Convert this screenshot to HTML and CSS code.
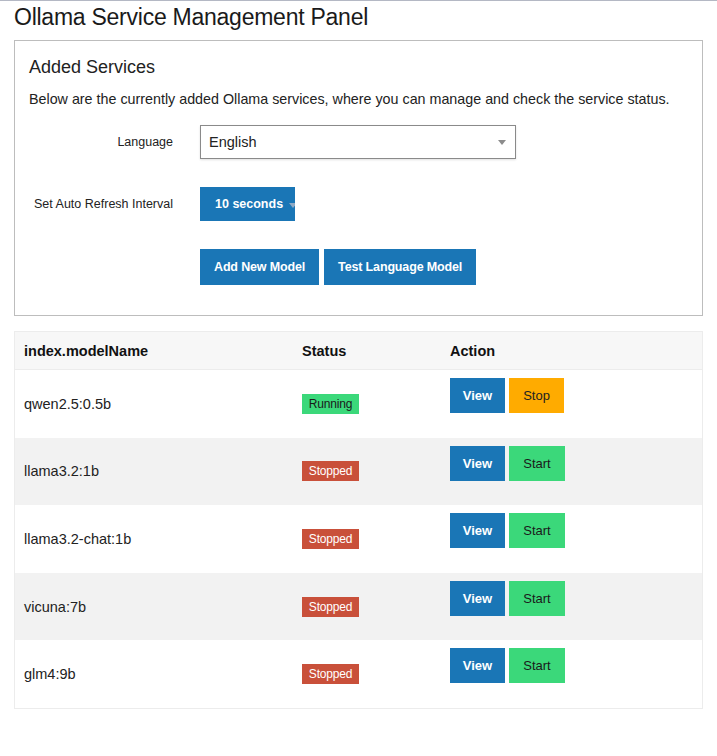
FILE: index.html
```html
<!DOCTYPE html>
<html lang="en">
<head>
<meta charset="utf-8">
<title>Ollama Service Management Panel</title>
<link rel="stylesheet" href="styles.css">
</head>
<body>
<div class="page">
  <h1 class="title">Ollama Service Management Panel</h1>

  <section class="card">
    <h2 class="card-title">Added Services</h2>
    <p class="card-desc">Below are the currently added Ollama services, where you can manage and check the service status.</p>

    <div class="form">
      <label class="form-label">Language</label>
      <div class="select">
        <span>English</span>
        <span class="caret"></span>
      </div>

      <label class="form-label">Set Auto Refresh Interval</label>
      <div>
        <div class="dropdown-btn">10 seconds<span class="caret caret-btn"></span></div>
      </div>

      <span class="form-label"></span>
      <div class="btn-row">
        <button class="btn btn-blue btn-lg">Add New Model</button>
        <button class="btn btn-blue btn-lg">Test Language Model</button>
      </div>
    </div>
  </section>

  <div class="table">
    <div class="row head">
      <div class="cell">index.modelName</div>
      <div class="cell">Status</div>
      <div class="cell">Action</div>
    </div>
    <div class="row">
      <div class="cell">qwen2.5:0.5b</div>
      <div class="cell"><span class="badge badge-run">Running</span></div>
      <div class="cell action"><button class="btn btn-blue">View</button><button class="btn btn-orange">Stop</button></div>
    </div>
    <div class="row alt">
      <div class="cell">llama3.2:1b</div>
      <div class="cell"><span class="badge badge-stop">Stopped</span></div>
      <div class="cell action"><button class="btn btn-blue">View</button><button class="btn btn-green">Start</button></div>
    </div>
    <div class="row">
      <div class="cell">llama3.2-chat:1b</div>
      <div class="cell"><span class="badge badge-stop">Stopped</span></div>
      <div class="cell action"><button class="btn btn-blue">View</button><button class="btn btn-green">Start</button></div>
    </div>
    <div class="row alt">
      <div class="cell">vicuna:7b</div>
      <div class="cell"><span class="badge badge-stop">Stopped</span></div>
      <div class="cell action"><button class="btn btn-blue">View</button><button class="btn btn-green">Start</button></div>
    </div>
    <div class="row">
      <div class="cell">glm4:9b</div>
      <div class="cell"><span class="badge badge-stop">Stopped</span></div>
      <div class="cell action"><button class="btn btn-blue">View</button><button class="btn btn-green">Start</button></div>
    </div>
  </div>
</div>
</body>
</html>
```

FILE: styles.css
```css
html, body {
  margin: 0;
  padding: 0;
  background: #fff;
}
body {
  border-top: 1px solid #b4b8c4;
  font-family: "Liberation Sans", Arial, sans-serif;
  color: #222;
}
.page {
  padding: 0 14px 40px;
}
.title {
  margin: 2px 0 9px;
  font-size: 23px;
  line-height: 28px;
  letter-spacing: -0.25px;
  font-weight: normal;
  color: #1a1a1a;
}
.card {
  border: 1px solid #bdbdbd;
  padding: 15px 14px 30px;
}
.card-title {
  margin: 0;
  font-size: 18px;
  line-height: 22px;
  font-weight: normal;
  color: #222;
}
.card-desc {
  margin: 11px 0 16px;
  font-size: 14.3px;
  line-height: 20px;
}
.form {
  display: grid;
  grid-template-columns: 144px 1fr;
  column-gap: 27px;
  row-gap: 28px;
  align-items: center;
}
.form-label {
  text-align: right;
  font-size: 12.5px;
  color: #222;
}
.select {
  box-sizing: border-box;
  width: 316px;
  height: 34px;
  border: 1px solid #8a8a8a;
  box-shadow: 0 1px 2px rgba(0,0,0,0.12);
  display: flex;
  align-items: center;
  justify-content: space-between;
  padding: 0 9px 0 8px;
  font-size: 14.5px;
  color: #222;
}
.caret {
  width: 0;
  height: 0;
  border-left: 4px solid transparent;
  border-right: 4px solid transparent;
  border-top: 5px solid #8c8c8c;
}
.dropdown-btn {
  box-sizing: border-box;
  display: flex;
  align-items: center;
  width: 95px;
  height: 34px;
  padding-left: 15px;
  background: #1a76b6;
  color: #fff;
  font-size: 12.5px;
  font-weight: bold;
  white-space: nowrap;
  overflow: hidden;
}
.caret-btn {
  flex: none;
  margin-left: 6px;
  margin-top: 2px;
  border-top-color: #8fa9c4;
}
.btn-row {
  display: flex;
  gap: 5px;
}
.btn {
  font-family: inherit;
  border: 0;
  margin: 0;
  cursor: pointer;
  height: 35px;
  width: 55px;
  padding: 0;
  font-size: 13px;
}
.btn-lg {
  width: auto;
  height: 36px;
  padding: 0 14px;
  font-size: 12.5px;
  letter-spacing: -0.15px;
  font-weight: bold;
}
.btn-blue {
  background: #1a76b6;
  color: #fff;
  font-weight: bold;
}
.btn-orange {
  background: #ffab00;
  color: #222;
}
.btn-green {
  background: #3bd87a;
  color: #1a1a1a;
  width: 56px;
}
.table {
  margin-top: 15px;
  border: 1px solid #ececec;
}
.row {
  display: grid;
  grid-template-columns: 278px 148px 1fr;
  height: 67.6px;
  align-items: center;
  font-size: 14.5px;
  color: #222;
}
.row.head {
  height: 37px;
  background: #f7f7f7;
  border-bottom: 1px solid #ececec;
  font-weight: bold;
  color: #111;
}
.row.alt {
  background: #f2f2f2;
}
.cell {
  padding: 0 10px 0 9px;
}
.cell.action {
  align-self: start;
  padding-top: 8px;
  display: flex;
  gap: 4px;
}
.badge {
  display: inline-block;
  box-sizing: border-box;
  width: 57px;
  height: 20px;
  line-height: 20px;
  text-align: center;
  font-size: 12px;
  letter-spacing: -0.2px;
}
.badge-run {
  background: #3bd87a;
  color: #1a1a1a;
}
.badge-stop {
  background: #c9503a;
  color: #fff;
}
```
